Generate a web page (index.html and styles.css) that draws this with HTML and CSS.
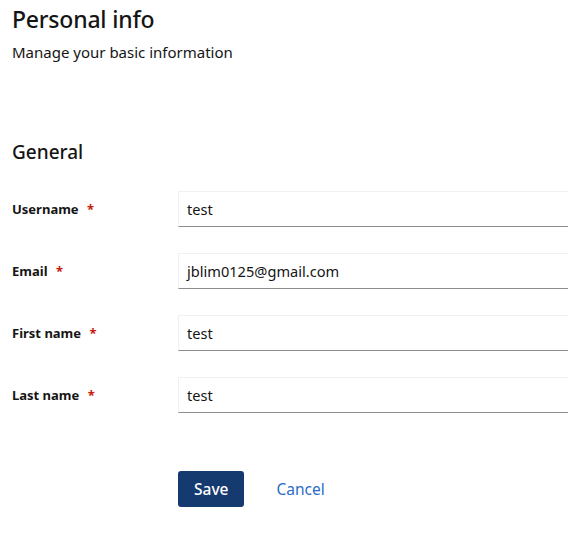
FILE: index.html
```html
<!DOCTYPE html>
<html>
<head>
<meta charset="utf-8">
<link rel="stylesheet" href="styles.css">
</head>
<body>
<main class="page">
  <header class="head">
    <h1 class="title">Personal info</h1>
    <p class="subtitle">Manage your basic information</p>
  </header>
  <section class="form">
    <h2 class="section-title">General</h2>
    <div class="row">
      <label class="label">Username <span class="req">*</span></label>
      <div class="input">test</div>
    </div>
    <div class="row">
      <label class="label">Email <span class="req">*</span></label>
      <div class="input">jblim0125@gmail.com</div>
    </div>
    <div class="row">
      <label class="label">First name <span class="req">*</span></label>
      <div class="input">test</div>
    </div>
    <div class="row">
      <label class="label">Last name <span class="req">*</span></label>
      <div class="input">test</div>
    </div>
    <div class="actions">
      <button class="btn-primary">Save</button>
      <button class="btn-link">Cancel</button>
    </div>
  </section>
</main>
</body>
</html>
```
FILE: styles.css
```css
* { box-sizing: border-box; }
html, body { margin: 0; padding: 0; background: #fff; overflow: hidden; }
body { font-family: "Noto Sans", sans-serif; color: #151515; }
.page { padding: 5px 12px 0 12px; width: 568px; }
.title { margin: 0; font-size: 23px; font-weight: 500; line-height: 28px; letter-spacing: -0.2px; }
.subtitle { margin: 8px 0 0; font-size: 15px; line-height: 22px; }
.form { margin-top: 76px; }
.section-title { margin: 0; font-size: 19px; font-weight: 500; line-height: 26px; }
.row { display: grid; grid-template-columns: 166px 1fr; align-items: center; height: 36px; margin-top: 26px; }
.label { font-size: 13px; font-weight: 700; }
.req { color: #c9190b; margin-left: 5px; }
.input { height: 36px; margin-right: -30px; border: 1px solid #f0f0f0; border-bottom-color: #8a8d90; padding: 0 8px; font-size: 14.6px; line-height: 34px; }
.actions { display: flex; align-items: center; gap: 16px; margin-top: 58px; padding-left: 166px; }
.btn-primary { height: 36px; padding: 0 16px; border: none; border-radius: 3px; background: #153a6f; color: #fff; font-family: inherit; font-size: 15.5px; font-weight: 500; }
.btn-link { height: 36px; padding: 0 16px; border: none; background: none; color: #2b6cc9; font-family: inherit; font-size: 15.5px; }
```
